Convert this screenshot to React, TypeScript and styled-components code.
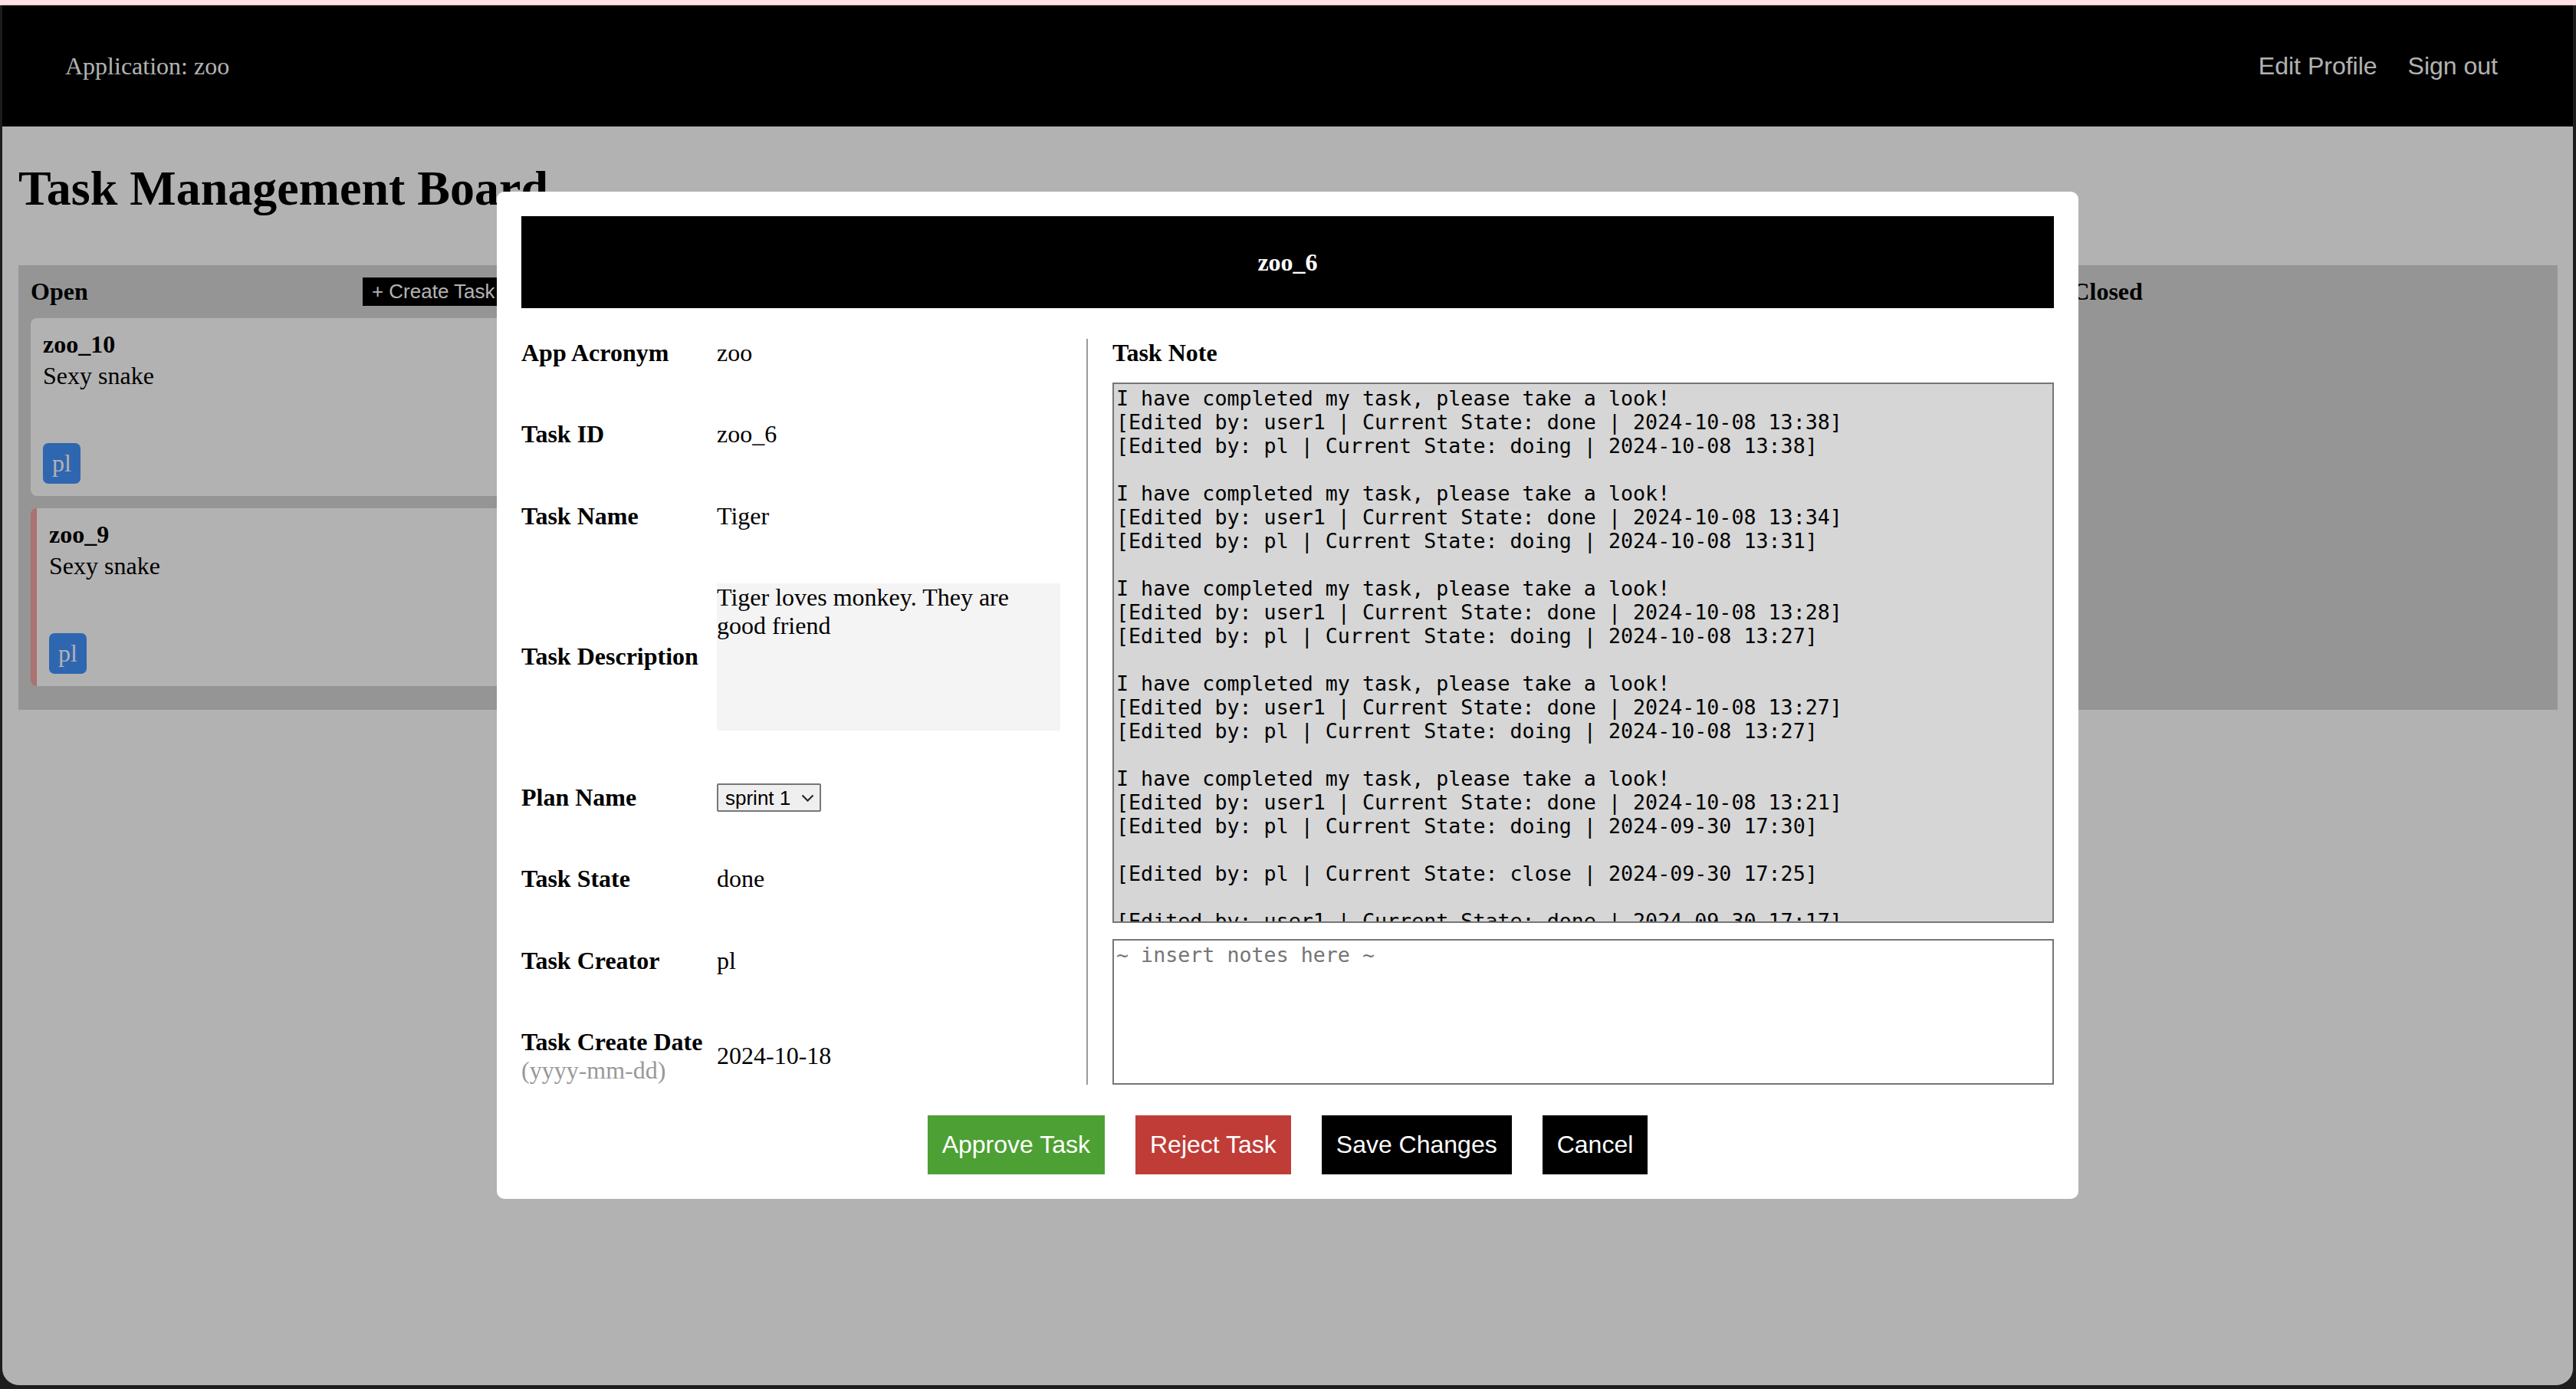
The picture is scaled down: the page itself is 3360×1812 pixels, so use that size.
import React from "react";
import styled, { createGlobalStyle } from "styled-components";

const GlobalStyle = createGlobalStyle`
  html, body {
    margin: 0;
    padding: 0;
    background: #1d1d1d;
  }
  #root {
    width: 3360px;
    height: 1812px;
    overflow: hidden;
  }
`;

const SERIF = `"Liberation Serif", "Times New Roman", serif`;
const SANS = `"Liberation Sans", Arial, sans-serif`;
const MONO = `"DejaVu Sans Mono", Menlo, monospace`;

const TopStrip = styled.div`
  height: 6px;
  background: #fde0e5;
  border-bottom: 1px solid #d9c3c7;
`;

const Window = styled.div`
  position: relative;
  margin: 0 4px 0 3px;
  height: 1800px;
  background: #fff;
  border-radius: 0 0 22px 22px;
  overflow: hidden;
  font-family: ${SERIF};
`;

const NavBar = styled.nav`
  display: flex;
  align-items: center;
  justify-content: space-between;
  height: 158px;
  padding: 0 98px 0 82px;
  background: #000;
  color: #fff;
`;

const AppName = styled.span`
  font-family: ${SERIF};
  font-size: 32px;
`;

const NavLinks = styled.div`
  display: flex;
  gap: 40px;
`;

const NavLink = styled.a`
  font-family: ${SANS};
  font-size: 32px;
  color: #fff;
  text-decoration: none;
`;

const Main = styled.main`
  padding: 0 20px 0 21px;
`;

const Title = styled.h1`
  margin: 44px 0 63px;
  font-size: 64px;
  font-weight: bold;
`;

const Board = styled.div`
  display: grid;
  grid-template-columns: repeat(5, 1fr);
  column-gap: 16px;
  height: 580px;
  background: #d6d6d6;
`;

const Column = styled.section`
  display: flex;
  flex-direction: column;
  gap: 16px;
  padding: 16px;
  min-width: 0;
`;

const ColumnHead = styled.div`
  display: flex;
  align-items: center;
  justify-content: space-between;
  height: 37px;
`;

const ColumnName = styled.h3`
  margin: 0;
  font-size: 32px;
  font-weight: bold;
`;

const CreateButton = styled.button`
  height: 37px;
  padding: 0 12px;
  border: none;
  background: #000;
  color: #fff;
  font-family: ${SANS};
  font-size: 26px;
  white-space: nowrap;
`;

const Card = styled.div<{ $flag?: boolean }>`
  display: flex;
  flex-direction: column;
  height: 232px;
  box-sizing: border-box;
  padding: 16px;
  background: #fff;
  border-radius: 8px;
  border-left: ${(p) => (p.$flag ? "8px solid #f6a2a2" : "none")};
`;

const CardId = styled.div`
  font-size: 32px;
  font-weight: bold;
  line-height: 37px;
`;

const CardName = styled.div`
  margin-top: 4px;
  font-size: 32px;
  line-height: 37px;
`;

const Avatar = styled.div`
  display: flex;
  align-items: center;
  justify-content: center;
  margin-top: auto;
  width: 49px;
  height: 53px;
  border-radius: 7px;
  background: #4492fd;
  color: #fff;
  font-size: 32px;
`;

const Overlay = styled.div`
  position: absolute;
  inset: 0;
  display: flex;
  align-items: center;
  justify-content: center;
  background: rgba(0, 0, 0, 0.3);
`;

const Modal = styled.div`
  width: 2063px;
  box-sizing: border-box;
  padding: 32px;
  background: #fff;
  border-radius: 10px;
`;

const ModalHeader = styled.div`
  display: flex;
  align-items: center;
  justify-content: center;
  height: 120px;
  background: #000;
  color: #fff;
  font-size: 32px;
  font-weight: bold;
`;

const ModalBody = styled.div`
  display: flex;
  margin-top: 40px;
`;

const Details = styled.div`
  display: grid;
  grid-template-columns: 255px 448px;
  align-items: center;
  row-gap: 69px;
  width: 737px;
  flex-shrink: 0;
`;

const Label = styled.div`
  font-size: 32px;
  font-weight: bold;
  line-height: 37px;
`;

const Hint = styled.div`
  font-weight: normal;
  color: #999;
`;

const Value = styled.div`
  font-size: 32px;
  line-height: 37px;
`;

const Description = styled.textarea`
  display: block;
  width: 448px;
  height: 192px;
  box-sizing: border-box;
  margin: 0;
  padding: 0;
  border: none;
  background: #f4f4f4;
  font-family: ${SERIF};
  font-size: 32px;
  line-height: 37px;
  color: #000;
  resize: none;
  outline: none;
`;

const SelectWrap = styled.div`
  position: relative;
  width: 136px;
  height: 37px;
`;

const PlanSelect = styled.select`
  appearance: none;
  width: 136px;
  height: 37px;
  padding: 0 34px 0 9px;
  border: 2px solid #767676;
  border-radius: 2px;
  background: #efefef;
  color: #000;
  font-family: ${SANS};
  font-size: 26px;
`;

const Chevron = styled.svg`
  position: absolute;
  right: 9px;
  top: 14px;
  pointer-events: none;
`;

const NotePanel = styled.div`
  display: flex;
  flex-direction: column;
  flex: 1;
  padding-left: 32px;
  border-left: 2px solid #9a9a9a;
`;

const NoteTitle = styled.div`
  margin-bottom: 20px;
  font-size: 32px;
  font-weight: bold;
  line-height: 37px;
`;

const NoteBox = styled.textarea<{ $log?: boolean }>`
  display: block;
  width: 100%;
  height: ${(p) => (p.$log ? "705px" : "190px")};
  margin: ${(p) => (p.$log ? "0 0 21px" : "0")};
  box-sizing: border-box;
  padding: 3px;
  border: 2px solid #767676;
  background: ${(p) => (p.$log ? "#d6d6d6" : "#fff")};
  color: #000;
  font-family: ${MONO};
  font-size: 26.67px;
  line-height: 31px;
  resize: none;
  overflow: hidden;
  outline: none;

  &::placeholder {
    color: #757575;
  }
`;

const Actions = styled.div`
  display: flex;
  justify-content: center;
  gap: 40px;
  margin-top: 40px;
`;

const ActionButton = styled.button<{ $tone: string }>`
  height: 77px;
  padding: 0 19px;
  border: none;
  background: ${(p) => p.$tone};
  color: #fff;
  font-family: ${SANS};
  font-size: 32px;
`;

const columns = ["Open", "To Do", "Doing", "Done", "Closed"];

const notes = [
  "I have completed my task, please take a look!",
  "[Edited by: user1 | Current State: done | 2024-10-08 13:38]",
  "[Edited by: pl | Current State: doing | 2024-10-08 13:38]",
  "",
  "I have completed my task, please take a look!",
  "[Edited by: user1 | Current State: done | 2024-10-08 13:34]",
  "[Edited by: pl | Current State: doing | 2024-10-08 13:31]",
  "",
  "I have completed my task, please take a look!",
  "[Edited by: user1 | Current State: done | 2024-10-08 13:28]",
  "[Edited by: pl | Current State: doing | 2024-10-08 13:27]",
  "",
  "I have completed my task, please take a look!",
  "[Edited by: user1 | Current State: done | 2024-10-08 13:27]",
  "[Edited by: pl | Current State: doing | 2024-10-08 13:27]",
  "",
  "I have completed my task, please take a look!",
  "[Edited by: user1 | Current State: done | 2024-10-08 13:21]",
  "[Edited by: pl | Current State: doing | 2024-09-30 17:30]",
  "",
  "[Edited by: pl | Current State: close | 2024-09-30 17:25]",
  "",
  "[Edited by: user1 | Current State: done | 2024-09-30 17:17]",
  "[Edited by: pl | Current State: open | 2024-09-30 17:10]",
].join("\n");

export default function App() {
  return (
    <>
      <GlobalStyle />
      <TopStrip />
      <Window>
        <NavBar>
          <AppName>Application: zoo</AppName>
          <NavLinks>
            <NavLink>Edit Profile</NavLink>
            <NavLink>Sign out</NavLink>
          </NavLinks>
        </NavBar>
        <Main>
          <Title>Task Management Board</Title>
          <Board>
            {columns.map((name) => (
              <Column key={name}>
                <ColumnHead>
                  <ColumnName>{name}</ColumnName>
                  {name === "Open" && <CreateButton>+ Create Task</CreateButton>}
                </ColumnHead>
                {name === "Open" && (
                  <>
                    <Card>
                      <CardId>zoo_10</CardId>
                      <CardName>Sexy snake</CardName>
                      <Avatar>pl</Avatar>
                    </Card>
                    <Card $flag>
                      <CardId>zoo_9</CardId>
                      <CardName>Sexy snake</CardName>
                      <Avatar>pl</Avatar>
                    </Card>
                  </>
                )}
              </Column>
            ))}
          </Board>
        </Main>

        <Overlay>
          <Modal>
            <ModalHeader>zoo_6</ModalHeader>
            <ModalBody>
              <Details>
                <Label>App Acronym</Label>
                <Value>zoo</Value>
                <Label>Task ID</Label>
                <Value>zoo_6</Value>
                <Label>Task Name</Label>
                <Value>Tiger</Value>
                <Label>Task Description</Label>
                <Description readOnly value="Tiger loves monkey. They are good friend" />
                <Label>Plan Name</Label>
                <SelectWrap>
                  <PlanSelect defaultValue="sprint 1">
                    <option>sprint 1</option>
                    <option>sprint 2</option>
                  </PlanSelect>
                  <Chevron width="17" height="10" viewBox="0 0 17 10">
                    <polyline points="1.5,1.5 8.5,8.5 15.5,1.5" fill="none" stroke="#222" strokeWidth="2" />
                  </Chevron>
                </SelectWrap>
                <Label>Task State</Label>
                <Value>done</Value>
                <Label>Task Creator</Label>
                <Value>pl</Value>
                <Label>
                  Task Create Date
                  <Hint>(yyyy-mm-dd)</Hint>
                </Label>
                <Value>2024-10-18</Value>
              </Details>
              <NotePanel>
                <NoteTitle>Task Note</NoteTitle>
                <NoteBox $log readOnly value={notes} />
                <NoteBox placeholder="~ insert notes here ~" />
              </NotePanel>
            </ModalBody>
            <Actions>
              <ActionButton $tone="#4da033">Approve Task</ActionButton>
              <ActionButton $tone="#c03d37">Reject Task</ActionButton>
              <ActionButton $tone="#000">Save Changes</ActionButton>
              <ActionButton $tone="#000">Cancel</ActionButton>
            </Actions>
          </Modal>
        </Overlay>
      </Window>
    </>
  );
}
